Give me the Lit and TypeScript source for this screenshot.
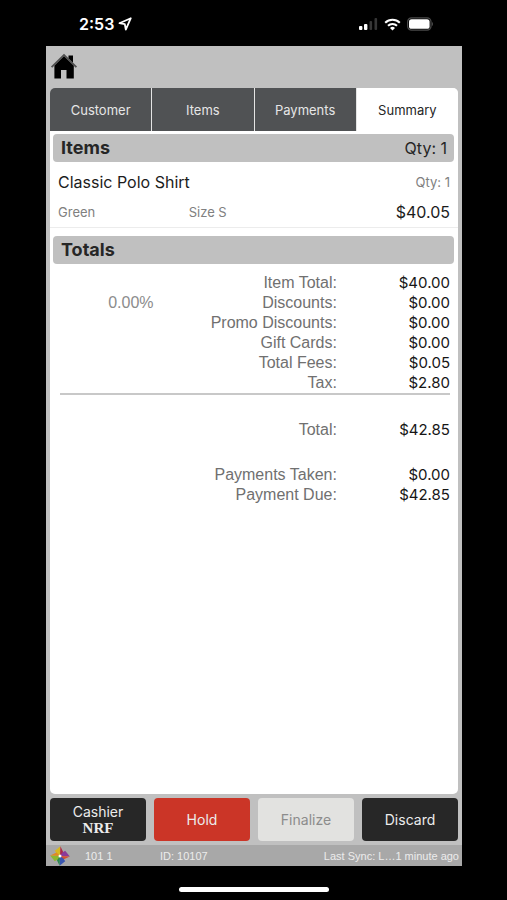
import { LitElement, html, css, svg, nothing } from "lit";
import { customElement, property, state } from "lit/decorators.js";
import { classMap } from "lit/directives/class-map.js";

interface TotalRow {
  label: string;
  value: string;
  percent?: string;
}

@customElement("status-bar")
class StatusBar extends LitElement {
  static styles = css`
    :host {
      display: flex;
      justify-content: space-between;
      align-items: center;
      height: 46px;
      padding: 2px 73px 0 79px;
      box-sizing: border-box;
      color: #fff;
      font: 600 16px/20px Inter, sans-serif;
    }
    .side {
      display: flex;
      align-items: center;
      gap: 4px;
    }
    .status {
      gap: 6px;
    }
    svg {
      display: block;
    }
  `;

  render() {
    return html`
      <div class="side">
        <span>2:53</span>
        <svg width="14" height="14" viewBox="0 0 14 14" fill="none" stroke="#fff" stroke-width="1.8" stroke-linejoin="round">
          <path d="M12.8 1.2 1.4 6.2 6.800 7.200l1 5.400Z" />
        </svg>
      </div>
      <div class="side status">
        <svg width="20" height="14" viewBox="0 0 20 14">
          <rect x="1" y="9" width="3.4" height="4" rx="1" fill="#fff" />
          <rect x="6" y="7" width="3.4" height="6" rx="1" fill="#fff" />
          <rect x="11.500" y="4" width="2.600" height="9" rx="1" fill="#363636" />
          <rect x="16.500" y="1" width="2.600" height="12" rx="1" fill="#363636" />
        </svg>
        <svg width="17" height="13" viewBox="0 0 17 13" fill="none" stroke="#fff" stroke-width="2">
          <path d="M1.2 4.8a10.4 10.4 0 0 1 14.6 0" />
          <path d="M4 7.8a6.4 6.4 0 0 1 9 0" />
          <path d="M8.5 12.4 6 9.9a3.6 3.6 0 0 1 5 0Z" fill="#fff" stroke="none" />
        </svg>
        <svg width="27" height="14" viewBox="0 0 27 14">
          <rect x="0.6" y="0.8" width="23.4" height="12.4" rx="4" fill="none" stroke="#4a4a4a" stroke-width="1.2" />
          <rect x="2" y="2.2" width="20.6" height="9.6" rx="2.6" fill="#fff" />
          <path d="M25 5c1.4.6 1.4 3.4 0 4Z" fill="#4a4a4a" />
        </svg>
      </div>
    `;
  }
}

@customElement("section-bar")
class SectionBar extends LitElement {
  @property() heading = "";
  @property() note = "";

  static styles = css`
    :host {
      display: flex;
      justify-content: space-between;
      align-items: center;
      height: 28px;
      margin: 0 4px 0 3px;
      padding: 0 7px 0 8px;
      border-radius: 4px;
      background: #c0c0c0;
      color: #262626;
      font: 16px/20px Inter, sans-serif;
    }
    .heading {
      margin: 0;
      font-size: 18px;
      font-weight: 700;
    }
  `;

  render() {
    return html`
      <h2 class="heading">${this.heading}</h2>
      ${this.note ? html`<span>${this.note}</span>` : nothing}
    `;
  }
}

const petal = (angle: number, light: string, dark: string) => svg`
  <g transform=${`rotate(${angle} 10 10)`}>
    <path d="M10.4 0.2 4.800 4.800 6.600 7.600 10 10Z" fill=${light} />
    <path d="M10.4 0.2 13.400 6.600 10 10Z" fill=${dark} />
  </g>`;

@customElement("app-root")
class AppRoot extends LitElement {
  @state() private tab = "Summary";

  private tabs = ["Customer", "Items", "Payments", "Summary"];

  private groups: TotalRow[][] = [
    [
      { label: "Item Total:", value: "$40.00" },
      { label: "Discounts:", value: "$0.00", percent: "0.00%" },
      { label: "Promo Discounts:", value: "$0.00" },
      { label: "Gift Cards:", value: "$0.00" },
      { label: "Total Fees:", value: "$0.05" },
      { label: "Tax:", value: "$2.80" },
    ],
    [{ label: "Total:", value: "$42.85" }],
    [
      { label: "Payments Taken:", value: "$0.00" },
      { label: "Payment Due:", value: "$42.85" },
    ],
  ];

  static styles = css`
    :host {
      display: flex;
      flex-direction: column;
      min-height: 100vh;
      background: #000;
      font-family: Inter, sans-serif;
    }
    button {
      margin: 0;
      padding: 0;
      border: 0;
      font: inherit;
      color: inherit;
      background: none;
    }
    svg {
      display: block;
    }
    .app {
      flex: 1;
      display: flex;
      flex-direction: column;
      margin: 0 45px 0 46px;
      background: #c0c0c0;
    }
    .toolbar {
      display: flex;
      align-items: center;
      height: 42px;
      padding: 0 4px;
    }
    .tabs {
      display: grid;
      grid-template-columns: repeat(4, 1fr);
      gap: 1px;
      margin: 0 4px;
      border-radius: 5px 5px 0 0;
      overflow: hidden;
      background: #e4e4e4;
    }
    .tab {
      height: 43px;
      background: #505254;
      color: #e6e6e6;
      font-size: 13px;
      line-height: 20px;
    }
    .tab.active {
      background: #fff;
      color: #262626;
    }
    .panel {
      flex: 1;
      margin: 0 4px;
      padding-top: 3px;
      border-radius: 0 0 5px 5px;
      background: #fff;
    }
    .item {
      display: flex;
      flex-direction: column;
      gap: 10px;
      margin-bottom: 8px;
      padding: 10px 8px 5px;
      border-bottom: 1px solid #ececec;
      color: #1c1c1c;
      font-size: 16px;
      line-height: 20px;
    }
    .line {
      display: grid;
      grid-template-columns: 1fr 2fr;
      align-items: center;
    }
    .line.first {
      grid-template-columns: 1fr auto;
    }
    .rest {
      display: flex;
      justify-content: space-between;
      align-items: center;
    }
    .muted {
      color: #808080;
      font-size: 13px;
    }
    .totals {
      width: calc(100% - 18px);
      margin: 9px 8px 0 10px;
      border-collapse: collapse;
      table-layout: fixed;
      color: #161616;
      line-height: 20px;
      text-align: right;
    }
    .totals th,
    .totals td {
      padding: 0;
      font-weight: 400;
    }
    .totals th {
      color: #707070;
      font-family: "Liberation Sans", sans-serif;
      font-size: 16px;
    }
    .totals .percent {
      width: 24%;
      color: #8c8c8c;
      font-family: "Liberation Sans", sans-serif;
      font-size: 16px;
    }
    .totals .amount {
      width: 29%;
      font-size: 15px;
    }
    .totals .first {
      border-bottom: 2px solid #c8c8c8;
    }
    .totals .spaced th,
    .totals .spaced td {
      padding-top: 25px;
    }
    .actions {
      display: grid;
      grid-template-columns: repeat(4, 1fr);
      gap: 8px;
      padding: 4px;
    }
    .action {
      height: 43px;
      border-radius: 4px;
      background: #272727;
      color: #ececec;
      font-size: 14px;
      line-height: 16px;
    }
    .hold {
      background: #cb3527;
    }
    .finalize {
      background: #e2e2e0;
      color: #8c8c8c;
    }
    .cashier {
      display: block;
      font: 700 15px/16px "Liberation Serif", serif;
    }
    .footer {
      display: flex;
      align-items: center;
      height: 21px;
      padding: 0 3px 0 4px;
      background: #a8a8a8;
      color: #ececec;
      font: 11px/16px "Liberation Sans", sans-serif;
    }
    .station {
      width: 22%;
      padding-left: 15px;
      box-sizing: border-box;
    }
    .ticket {
      flex: 1;
    }
    .home-bar {
      display: flex;
      justify-content: center;
      height: 34px;
      padding-top: 21px;
      box-sizing: border-box;
    }
    .grip {
      width: 150px;
      height: 5px;
      border-radius: 3px;
      background: #fff;
    }
  `;

  private renderRow(row: TotalRow, spaced: boolean) {
    return html`
      <tr class=${classMap({ spaced })}>
        <td class="percent">${row.percent ?? nothing}</td>
        <th scope="row">${row.label}</th>
        <td class="amount">${row.value}</td>
      </tr>
    `;
  }

  render() {
    return html`
      <status-bar></status-bar>
      <main class="app">
        <header class="toolbar">
          <button aria-label="Home">
            <svg width="28" height="28" viewBox="0 0 28 28">
              <path d="M18.500 2.500h4.500V10l-4.500-4.500Z" />
              <path d="M14 3 4.400 12.400V25.400H11V17h5.500v8.400h7.300V12.400Z" />
              <path d="M1.600 14.200 14 2l12.400 12.200" fill="none" stroke="#505050" stroke-width="1.800" />
            </svg>
          </button>
        </header>
        <nav class="tabs">
          ${this.tabs.map(
            (name) => html`
              <button class=${classMap({ tab: true, active: name === this.tab })} @click=${() => (this.tab = name)}>
                ${name}
              </button>
            `
          )}
        </nav>
        <div class="panel">
          <section-bar heading="Items" note="Qty: 1"></section-bar>
          <article class="item">
            <div class="line first">
              <span>Classic Polo Shirt</span>
              <span class="muted">Qty: 1</span>
            </div>
            <div class="line">
              <span class="muted">Green</span>
              <div class="rest">
                <span class="muted">Size S</span>
                <span>$40.05</span>
              </div>
            </div>
          </article>
          <section-bar heading="Totals"></section-bar>
          <table class="totals">
            ${this.groups.map(
              (rows, g) => html`
                <tbody class=${classMap({ first: g === 0 })}>
                  ${rows.map((row, i) => this.renderRow(row, g > 0 && i === 0))}
                </tbody>
              `
            )}
          </table>
        </div>
        <div class="actions">
          <button class="action">Cashier<span class="cashier">NRF</span></button>
          <button class="action hold">Hold</button>
          <button class="action finalize" disabled>Finalize</button>
          <button class="action">Discard</button>
        </div>
        <footer class="footer">
          <svg width="20" height="20" viewBox="0 0 20 20">
            ${petal(0, "#d8b820", "#b02848")}
            ${petal(90, "#8c3a98", "#d85030")}
            ${petal(180, "#3a56b0", "#2c8a50")}
            ${petal(270, "#8cb830", "#e08a24")}
            <circle cx="10" cy="10" r="1.500" fill="#fff" />
          </svg>
          <span class="station">101 1</span>
          <span class="ticket">ID: 10107</span>
          <span>Last Sync: L…1 minute ago</span>
        </footer>
      </main>
      <div class="home-bar"><div class="grip"></div></div>
    `;
  }
}
